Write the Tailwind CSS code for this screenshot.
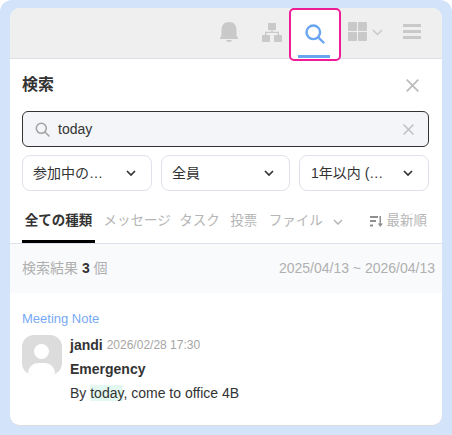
<!DOCTYPE html>
<html lang="en">
<head>
  <meta charset="UTF-8" />
  <title>Search panel</title>
  <script src="https://cdn.jsdelivr.net/npm/@tailwindcss/browser@4"></script>
</head>
<body class="bg-white">
  <div class="w-[452px] h-[435px] overflow-hidden rounded-t-[12px] bg-[#d2e3fa] pt-2 pb-[9px] px-[10px] font-['Liberation_Sans','Noto_Sans_CJK_JP',sans-serif]">
    <div class="h-[418px] bg-white rounded-[10px] overflow-hidden border-b border-[#dcdcdc] flex flex-col">

      <!-- Top toolbar -->
      <div class="relative h-[51px] shrink-0 bg-[#efefef] border-b border-[#dfdfe8] flex items-center">
        <svg class="absolute left-[210px] top-[14px]" width="18" height="20" viewBox="0 0 18 20" fill="#c9c9c9"><path d="M9 0C4 0 1.500 3.500 1.500 8V12.500C1.500 14 0.500 15 0 16V17H18V16C17.500 15 16.500 14 16.500 12.500V8C16.500 3.500 14 0 9 0Z"/><path d="M6 18H12C11.500 19.500 10.500 20 9 20C7.500 20 6.500 19.500 6 18Z"/></svg>
        <svg class="absolute left-[252px] top-[15px]" width="20" height="19" viewBox="0 0 20 19" fill="#c9c9c9"><rect x="6" y="0" width="8" height="7" rx="1"/><rect x="0" y="12" width="8" height="7" rx="1"/><rect x="12" y="12" width="8" height="7" rx="1"/><path d="M9.300 6H10.700V8.800H17V12.500H15.700V10.100H4.300V12.500H3V8.800H9.300Z"/></svg>
        <div class="absolute left-[279px] top-0 w-[52px] h-[53px] bg-white border-2 border-[#ee1c97] rounded-[5px] z-10 flex justify-center">
          <svg class="mt-[14px]" width="20" height="20" viewBox="0 0 20 20" fill="none" stroke="#6aa5f0" stroke-width="2.400"><circle cx="8.300" cy="8.300" r="6.800"/><path d="M13.300 13.300L18.500 18.500" stroke-linecap="round"/></svg>
          <div class="absolute left-[7px] bottom-[1px] w-[32px] h-[3px] bg-[#6aa5f0]"></div>
        </div>
        <svg class="absolute left-[338px] top-[14px]" width="19" height="19" viewBox="0 0 19 19" fill="#c9c9c9"><rect width="9" height="9" rx="1"/><rect x="10" width="9" height="9" rx="1"/><rect y="10" width="9" height="9" rx="1"/><rect x="10" y="10" width="9" height="9" rx="1"/></svg>
        <svg class="absolute left-[362px] top-[21px]" width="11" height="7" viewBox="0 0 11 7" fill="none" stroke="#c9c9c9" stroke-width="1.500"><path d="M1 1L5.500 5.500L10 1"/></svg>
        <div class="absolute left-[393px] top-[16px] w-[18px] flex flex-col gap-[3px]">
          <div class="h-[3px] bg-[#c9c9c9]"></div>
          <div class="h-[3px] bg-[#c9c9c9]"></div>
          <div class="h-[3px] bg-[#c9c9c9]"></div>
        </div>
      </div>

      <!-- Title -->
      <div class="h-[52px] shrink-0 flex items-center justify-between pl-3 pr-[23px]">
        <h2 class="text-[16px] font-bold text-[#333]">検索</h2>
        <svg width="13" height="13" viewBox="0 0 13 13" fill="none" stroke="#bdbdbd" stroke-width="1.800"><path d="M0.700 0.700L12.300 12.300M12.300 0.700L0.700 12.300"/></svg>
      </div>

      <!-- Search input -->
      <div class="ml-3 mr-[13px] h-[36px] shrink-0 bg-[#f4f5f8] border border-[#333] rounded-[6px] flex items-center pl-3 pr-[14px]">
        <svg width="15" height="15" viewBox="0 0 15 15" fill="none" stroke="#a3a3a3" stroke-width="1.600"><circle cx="6.300" cy="6.300" r="5"/><path d="M10 10L14 14" stroke-linecap="round"/></svg>
        <span class="ml-2 text-[14px] text-[#333] flex-1">today</span>
        <svg width="11" height="11" viewBox="0 0 11 11" fill="none" stroke="#c0c0c0" stroke-width="1.500"><path d="M0.500 0.500L10.500 10.500M10.500 0.500L0.500 10.500"/></svg>
      </div>

      <!-- Filters -->
      <div class="mx-3 mt-2 flex gap-[9px] shrink-0">
        <div class="w-[130px] h-[36px] border border-[#e0e2ea] rounded-[8px] flex items-center justify-between pl-[10px] pr-[15px] text-[14px] text-[#333]">
          <span>参加中の…</span>
          <svg width="10" height="7" viewBox="0 0 10 7" fill="none" stroke="#333" stroke-width="1.700"><path d="M1 1L5 5L9 1"/></svg>
        </div>
        <div class="w-[129px] h-[36px] border border-[#e0e2ea] rounded-[8px] flex items-center justify-between pl-[10px] pr-[15px] text-[14px] text-[#333]">
          <span>全員</span>
          <svg width="10" height="7" viewBox="0 0 10 7" fill="none" stroke="#333" stroke-width="1.700"><path d="M1 1L5 5L9 1"/></svg>
        </div>
        <div class="w-[130px] h-[36px] border border-[#e0e2ea] rounded-[8px] flex items-center justify-between pl-[11px] pr-[15px] text-[14px] text-[#333]">
          <span>1年以内 (…</span>
          <svg width="10" height="7" viewBox="0 0 10 7" fill="none" stroke="#333" stroke-width="1.700"><path d="M1 1L5 5L9 1"/></svg>
        </div>
      </div>

      <!-- Tabs -->
      <div class="relative h-[53px] shrink-0 border-b border-[#e0e2ea] flex items-center pl-3 pr-[15px] pt-[9px] text-[13.500px] text-[#b5b5b5]">
        <span class="w-[73px] text-center font-bold text-[#333]">全ての種類</span>
        <span class="absolute left-3 bottom-0 w-[73px] h-[3px] bg-black"></span>
        <span class="ml-[8.500px]">メッセージ</span>
        <span class="ml-[8.500px]">タスク</span>
        <span class="ml-[10.500px]">投票</span>
        <span class="ml-[11.500px]">ファイル</span>
        <svg class="ml-[10px]" width="10" height="6" viewBox="0 0 10 6" fill="none" stroke="#b5b5b5" stroke-width="1.500"><path d="M1 1L5 5L9 1"/></svg>
        <svg class="ml-auto" width="13" height="11" viewBox="0 0 13 11" fill="#8f8f8f"><rect width="8" height="2"/><rect y="4" width="6" height="2"/><rect y="8.500" width="3" height="2"/><path d="M9.500 0H11V7.500H13L10.250 11L7.800 7.500H9.500Z"/></svg>
        <span class="ml-1">最新順</span>
      </div>

      <!-- Result count -->
      <div class="h-[49px] shrink-0 bg-[#f9fafc] flex items-center justify-between pl-3 pr-[7px] text-[14px] text-[#b0b0b0]">
        <span>検索結果 <b class="text-[#333]">3</b> 個</span>
        <span>2025/04/13 ~ 2026/04/13</span>
      </div>

      <!-- Result item -->
      <div class="px-3 pt-[19px]">
        <div class="text-[13px] leading-[14px] text-[#78a9f5]">Meeting Note</div>
        <div class="flex mt-[9px]">
          <div class="relative w-[40px] h-[40px] rounded-[12px] bg-[#dcdcdc] overflow-hidden shrink-0">
            <div class="absolute left-[12px] top-[9px] w-[15px] h-[15px] rounded-full bg-white"></div>
            <div class="absolute left-[6px] top-[28px] w-[27px] h-[20px] rounded-full bg-white"></div>
          </div>
          <div class="ml-2">
            <div class="flex items-center leading-[14px] mt-[3px]">
              <span class="text-[14px] font-bold text-[#333]">jandi</span>
              <span class="ml-1 text-[12px] text-[#a6a6a6]">2026/02/28 17:30</span>
            </div>
            <div class="mt-[9px] text-[14px] leading-[16px] font-bold text-[#333]">Emergency</div>
            <div class="mt-2 text-[14px] leading-[16px] text-[#333]">By <span class="bg-[#e3f8f0]">today</span>, come to office 4B</div>
          </div>
        </div>
      </div>
    </div>
  </div>
</body>
</html>
